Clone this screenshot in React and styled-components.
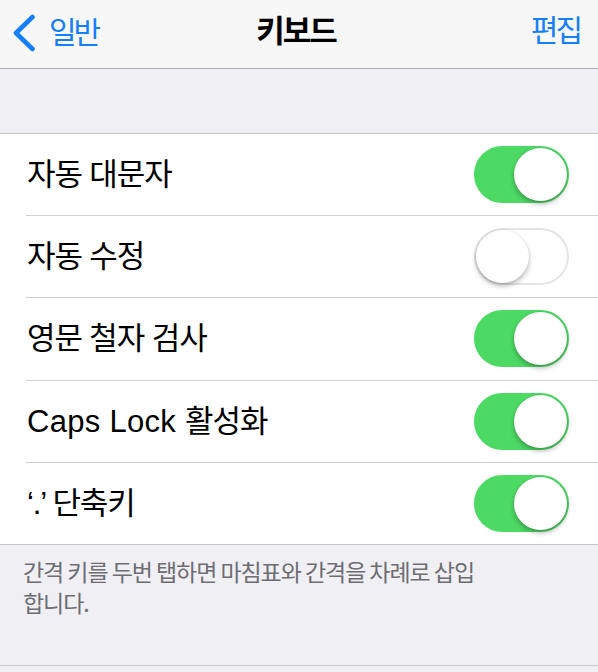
import React, { useState } from "react";
import styled, { createGlobalStyle } from "styled-components";

const Global = createGlobalStyle`
  html, body { margin: 0; padding: 0; background: #efeff4; }
  body { font-family: "Liberation Sans", "Noto Sans CJK KR", sans-serif; }
  * { box-sizing: border-box; }
`;

const Page = styled.div`
  width: 598px;
  height: 672px;
  overflow: hidden;
  background: #efeff4;
`;

const NavBar = styled.header`
  height: 69px;
  background: #f7f7f7;
  border-bottom: 1px solid #aeaeb2;
  display: grid;
  grid-template-columns: 1fr auto 1fr;
  align-items: center;
  padding: 0 18px 0 12px;
`;

const BackButton = styled.div`
  display: flex;
  align-items: center;
  gap: 13px;
  color: #157efb;
  font-family: "Noto Sans CJK KR", sans-serif;
  font-size: 30px;
  letter-spacing: -3px;
  margin-top: -8px;
`;

const Chevron = styled.svg`
  margin-top: 6px;
`;

const Title = styled.h1`
  margin: -12px 0 0 0;
  font-family: "Noto Sans CJK KR", sans-serif;
  font-weight: 700;
  font-size: 31px;
  letter-spacing: -2px;
  color: #000;
`;

const EditButton = styled.div`
  justify-self: end;
  color: #157efb;
  font-family: "Noto Sans CJK KR", sans-serif;
  font-size: 30px;
  letter-spacing: -3px;
  margin-top: -12px;
`;

const Spacer = styled.div`
  height: 64px;
`;

const Group = styled.section`
  background: #fff;
  border-top: 1px solid #c8c7cc;
  border-bottom: 1px solid #c8c7cc;
`;

const Row = styled.div`
  padding-left: 26px;
`;

const RowInner = styled.div`
  display: flex;
  align-items: center;
  justify-content: space-between;
  padding-right: 29px;
  border-bottom: ${(p) => (p.$last ? "none" : "1px solid #d2d2d6")};
  height: ${(p) => (p.$last ? "81.2px" : "82.2px")};
`;

const Label = styled.span`
  font-family: "Liberation Sans", "Noto Sans CJK KR", sans-serif;
  font-size: 31px;
  letter-spacing: -1.1px;
  color: #000;
  padding-left: 1px;
  margin-top: -6px;
`;

const Latin = styled.span`
  letter-spacing: 0.3px;
`;

const SwitchTrack = styled.button`
  width: 95px;
  height: 57px;
  border-radius: 29px;
  padding: 2px;
  border: 2px solid ${(p) => (p.$on ? "#4cd964" : "#e5e5e8")};
  background: ${(p) => (p.$on ? "#4cd964" : "#ffffff")};
  display: flex;
  align-items: center;
  justify-content: ${(p) => (p.$on ? "flex-end" : "flex-start")};
  cursor: pointer;
  flex-shrink: 0;
`;

const Knob = styled.span`
  width: 53px;
  height: 53px;
  margin: -2px;
  border-radius: 50%;
  background: #fff;
  box-shadow: 0 3px 5px rgba(0, 0, 0, 0.28), 0 0 0 0.5px rgba(0, 0, 0, 0.08);
`;

const Footer = styled.div`
  padding: 11px 23px 47px 23px;
  border-bottom: 1px solid #c8c7cc;
  font-family: "Noto Sans CJK KR", sans-serif;
  font-size: 23px;
  line-height: 31px;
  letter-spacing: -1.05px;
  color: #6d6d72;
`;

function Switch({ on, onToggle }) {
  return (
    <SwitchTrack $on={on} onClick={onToggle} aria-pressed={on}>
      <Knob />
    </SwitchTrack>
  );
}

const initial = [
  { key: "cap", label: "자동 대문자", on: true },
  { key: "fix", label: "자동 수정", on: false },
  { key: "spell", label: "영문 철자 검사", on: true },
  { key: "caps", latin: "Caps Lock ", label: "활성화", on: true },
  { key: "dot", label: "‘.’ 단축키", on: true },
];

export default function App() {
  const [items, setItems] = useState(initial);
  const toggle = (k) =>
    setItems((xs) => xs.map((x) => (x.key === k ? { ...x, on: !x.on } : x)));

  return (
    <Page>
      <Global />
      <NavBar>
        <BackButton>
          <Chevron width="24" height="38" viewBox="0 0 24 38">
            <polyline
              points="20.5,3 4,19 20.5,35"
              fill="none"
              stroke="#157efb"
              strokeWidth="4.6"
              strokeLinecap="round"
              strokeLinejoin="round"
            />
          </Chevron>
          <span>일반</span>
        </BackButton>
        <Title>키보드</Title>
        <EditButton>편집</EditButton>
      </NavBar>
      <Spacer />
      <Group>
        {items.map((it, i) => (
          <Row key={it.key}>
            <RowInner $last={i === items.length - 1}>
              <Label>
                {it.latin && <Latin>{it.latin}</Latin>}
                {it.label}
              </Label>
              <Switch on={it.on} onToggle={() => toggle(it.key)} />
            </RowInner>
          </Row>
        ))}
      </Group>
      <Footer>
        간격 키를 두번 탭하면 마침표와 간격을 차례로 삽입
        <br />
        합니다.
      </Footer>
    </Page>
  );
}
